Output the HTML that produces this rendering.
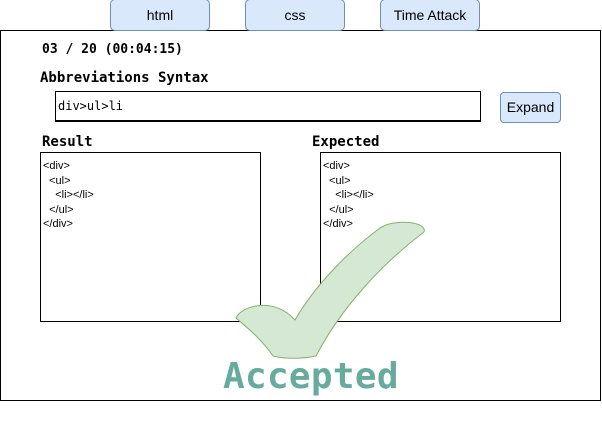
<!DOCTYPE html>
<html><head><style>
body{margin:0;width:602px;height:433px;background:#fff;position:relative;font-family:"Liberation Sans",sans-serif;overflow:hidden}
div{position:absolute;box-sizing:border-box}
.tab{top:-1px;height:32px;width:100px;background:#dae8fc;border:1px solid #6c8ebf;border-radius:5px;font-size:14px;text-align:center;line-height:31px}
.mono{font-family:"DejaVu Sans Mono","Liberation Mono",monospace}
.box{border:1px solid #000;background:#fff;font-size:11px;line-height:14.5px;padding:6px 2px;white-space:pre}
</style></head><body>
<div style="left:0;top:30px;width:601px;height:371px;border:1px solid #000"></div>
<div class="tab" style="left:110px">html</div>
<div class="tab" style="left:245px">css</div>
<div class="tab" style="left:380px">Time Attack</div>
<div class="mono" style="left:42px;top:42px;font-size:13px;font-weight:bold">03 / 20 (00:04:15)</div>
<div class="mono" style="left:40px;top:70px;font-size:14px;font-weight:bold">Abbreviations Syntax</div>
<div class="mono" style="top:91px;border:1px solid #000;border-bottom-width:2px;left:55px;width:426px;height:31px;font-size:12px;line-height:29px;padding-left:2px">div&gt;ul&gt;li</div>
<div style="left:500px;top:92px;width:61px;height:31px;background:#dae8fc;border:1px solid #6c8ebf;border-radius:4px;font-size:14px;text-align:center;line-height:29px">Expand</div>
<div class="mono" style="left:42px;top:134px;font-size:14px;font-weight:bold">Result</div>
<div class="mono" style="left:312px;top:134px;font-size:14px;font-weight:bold">Expected</div>
<div class="box" style="left:40px;top:152px;width:221px;height:170px">&lt;div&gt;
  &lt;ul&gt;
    &lt;li&gt;&lt;/li&gt;
  &lt;/ul&gt;
&lt;/div&gt;</div>
<div class="box" style="left:320px;top:152px;width:241px;height:170px">&lt;div&gt;
  &lt;ul&gt;
    &lt;li&gt;&lt;/li&gt;
  &lt;/ul&gt;
&lt;/div&gt;</div>
<svg style="position:absolute;left:0;top:0" width="602" height="433">
<path d="M236,318 C242,305 275,297 295,320 C315,285 350,250 380,228 C395,218 428,222 424,232 C380,265 340,310 316,356 C302,359 285,359 273,356 C262,340 250,330 236,318 Z" fill="#d5e8d4" stroke="#82b366" stroke-width="1"/>
</svg>
<div class="mono" style="left:223px;top:356px;font-size:36px;font-weight:bold;color:#67ab9f;letter-spacing:0.3px">Accepted</div>
</body></html>
